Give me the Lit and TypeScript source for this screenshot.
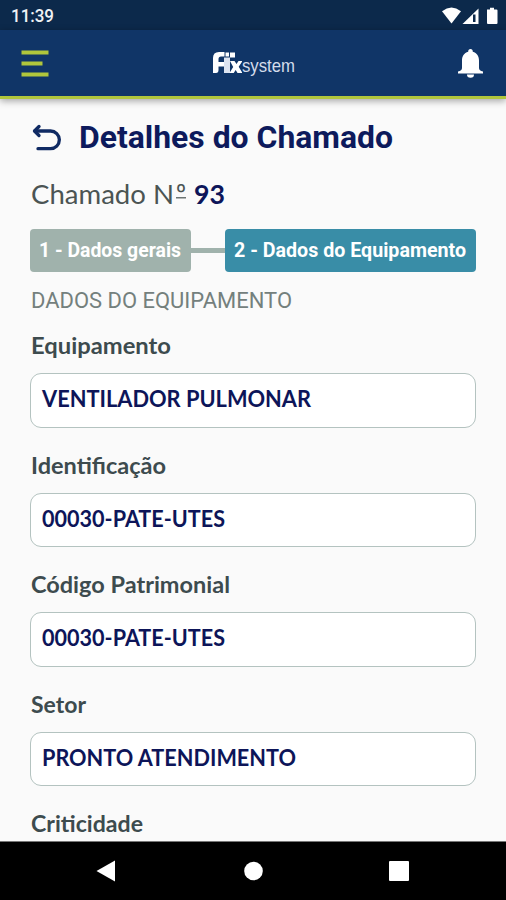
import { LitElement, html, css } from "lit";
import { customElement, property, state } from "lit/decorators.js";
import { styleMap } from "lit/directives/style-map.js";

/** One line of text condensed or widened to a given advance width. */
@customElement("fitted-text")
class FittedText extends LitElement {
  @property({ type: Number }) width = 0;
  @property() text = "";
  @state() ratio = 1;

  static styles = css`
    :host { display: block; white-space: pre; }
    .line { display: inline-block; transform-origin: 0 50%; }
  `;

  firstUpdated() {
    const line = this.renderRoot.querySelector(".line") as HTMLElement;
    this.ratio = this.width / line.getBoundingClientRect().width;
  }

  render() {
    return html`<span class="line" style=${styleMap({ transform: `scaleX(${this.ratio})` })}>${this.text}</span>`;
  }
}

@customElement("detail-field")
class DetailField extends LitElement {
  @property() label = "";
  @property() value = "";
  @property({ type: Number }) labelWidth = 0;
  @property({ type: Number }) valueWidth = 0;

  static styles = css`
    :host { display: block; height: 119.5px; flex: none; }
    .label { height: 30px; line-height: 30px; padding-left: 1px; margin-bottom: 12px;
      font-size: 22px; font-weight: 700; color: #3d4b4e; }
    .box { box-sizing: border-box; height: 54.5px; border: 1.5px solid #b4c3c0; border-radius: 11px;
      background: #fff; padding: 10px 0 0 11px; line-height: 30px;
      font-size: 22.5px; font-weight: 700; color: #0d1559; }
  `;

  render() {
    return html`
      <div class="label"><fitted-text .text=${this.label} .width=${this.labelWidth}></fitted-text></div>
      ${this.value
        ? html`<div class="box"><fitted-text .text=${this.value} .width=${this.valueWidth}></fitted-text></div>`
        : ""}
    `;
  }
}

const fields = [
  { label: "Equipamento", lw: 140, value: "VENTILADOR PULMONAR", vw: 269 },
  { label: "Identificação", lw: 135, value: "00030-PATE-UTES", vw: 183 },
  { label: "Código Patrimonial", lw: 199, value: "00030-PATE-UTES", vw: 183 },
  { label: "Setor", lw: 55, value: "PRONTO ATENDIMENTO", vw: 254 },
  { label: "Criticidade", lw: 112, value: "", vw: 0 },
];

@customElement("app-root")
class AppRoot extends LitElement {
  static styles = css`
    :host { display: flex; flex-direction: column; width: 506px; height: 900px; overflow: hidden;
      background: #fafafa; font-family: Lato, "Noto Sans", sans-serif; }
    svg { display: block; flex: none; }
    .status { flex: none; height: 30px; box-sizing: border-box; background: #0c294b; display: flex;
      align-items: center; justify-content: space-between; padding: 1px 8px 0 11px; }
    .clock { font: 500 17.5px/28px Roboto, sans-serif; color: #f0f2f5; }
    .bar { flex: none; height: 69px; box-sizing: border-box; background: #103567; border-bottom: 3px solid #b0c63c;
      display: flex; align-items: center; justify-content: space-between; padding: 0 23px 0 21px;
      box-shadow: 0 2px 7px rgba(0, 0, 0, 0.35); position: relative; }
    .brand { display: flex; align-items: center; padding-left: 9px; }
    .system { font: 400 19px/24px "Liberation Sans", sans-serif; color: #d4dceb; padding-top: 5px; }
    main { flex: 1; min-height: 0; overflow: hidden; padding: 18px 30px 0; display: flex; flex-direction: column; }
    .title { flex: none; display: flex; align-items: center; height: 40px; gap: 17px; padding-left: 2px; }
    .title fitted-text { font: 700 32px/40px Roboto, sans-serif; color: #0d1a5c; }
    .ticket { flex: none; display: flex; height: 36px; margin-top: 19px; padding-left: 1px;
      line-height: 36px; font-size: 27.5px; color: #4b5453; }
    .word { width: 145px; font-weight: 400; }
    .ordinal { width: 10px; margin-right: 8px;
      background: linear-gradient(#6c7473, #6c7473) 0 21px / 10px 1.5px no-repeat; }
    .number { font-weight: 700; color: #0d1559; width: 31px; }
    .steps { flex: none; display: flex; align-items: center; height: 43px; margin-top: 17px; }
    .step { box-sizing: border-box; height: 43px; border-radius: 4px; padding-left: 9px;
      font: 700 20px/43px Roboto, sans-serif; color: #fff; }
    .first { width: 161px; background: #a0b2ac; }
    .second { width: 251px; background: #398da7; }
    .link { width: 34px; height: 5px; background: #a0b2ac; }
    .section { flex: none; height: 28px; line-height: 28px; margin-top: 15px; padding-left: 1px;
      font-family: Roboto, sans-serif; font-size: 22px; font-weight: 400; color: #74807d; }
    .fields { margin-top: 16px; display: flex; flex-direction: column; }
    nav { flex: none; height: 59px; box-sizing: border-box; background: #000; border-top: 1px solid #777;
      display: flex; align-items: center; padding: 0 97px 0 96px; justify-content: space-between; }
  `;

  render() {
    return html`
      <div class="status">
        <fitted-text class="clock" .text=${"11:39"} .width=${43}></fitted-text>
        <svg width="56" height="18" viewBox="0 0 56 18" fill="#fff">
          <path d="M0 4.2Q9.500-3 19 4.200L9.500 16.500Z" />
          <path d="M36.500 1.500V17H20.500Z" />
          <path d="M31 7.500h2.500V15H31z" fill="#0c294b" />
          <path d="M45 2.500h3V.800h4v1.700h2.500a1 1 0 0 1 1 1V16a1 1 0 0 1-1 1H46a1 1 0 0 1-1-1z" />
        </svg>
      </div>
      <header class="bar">
        <svg width="28" height="27" viewBox="0 0 28 27" fill="#b0c63c">
          <path d="M.500.500h27v4H.500zM.500 11.500h21v4H.500zM.500 22.500h27v4H.500z" />
        </svg>
        <div class="brand">
          <svg width="29" height="24" viewBox="0 0 29 24" fill="#fff">
            <path d="M0 22V7Q0 1 6 1h5.500v4.500H8Q5.500 5.500 5.500 8v3H11v4.500H5.500V19q0 3-2.500 3z" />
            <path d="M11 6.500h6V22h-6z" fill="#dde4f0" />
            <path d="M12.500 1.500h3.500v4h-3.500zM17 1.500h5v5h-5z" />
            <path d="M17 10h4.500l2 3 2-3h4l-3.800 5.800L29.500 22h-5l-1.800-3-2 3H16.500l3.700-6z" />
          </svg>
          <fitted-text class="system" .text=${"system"} .width=${53}></fitted-text>
        </div>
        <svg width="25" height="29" viewBox="0 0 25 29" fill="#fff">
          <path d="M12.500 0c1.500 0 2.300 1 2.300 2.800C19 4 21 7.300 21 11.500V19q0 2.500 4 3.500v2H0v-2Q4 21.500 4 19v-7.500C4 7.300 6 4 10.200 2.800 10.200 1 11 0 12.500 0z" />
          <path d="M9 25.500h7a3.500 3.200 0 0 1-7 0z" />
        </svg>
      </header>
      <main>
        <div class="title">
          <svg width="30" height="28" viewBox="0 0 30 28" fill="none" stroke="#0f2a63" stroke-width="3.300"
            stroke-linecap="round" stroke-linejoin="round">
            <path d="M7 3.500 2.500 8l4.500 4.500" />
            <path d="M3 8h15.500a8.800 8.800 0 0 1 0 17.700H6" />
          </svg>
          <fitted-text .text=${"Detalhes do Chamado"} .width=${314}></fitted-text>
        </div>
        <div class="ticket">
          <fitted-text class="word" .text=${"Chamado N"} .width=${143}></fitted-text>
          <fitted-text class="ordinal" .text=${"º"} .width=${10}></fitted-text>
          <fitted-text class="number" .text=${"93"} .width=${31}></fitted-text>
        </div>
        <div class="steps">
          <div class="step first"><fitted-text .text=${"1 - Dados gerais"} .width=${142}></fitted-text></div>
          <div class="link"></div>
          <div class="step second"><fitted-text .text=${"2 - Dados do Equipamento"} .width=${232}></fitted-text></div>
        </div>
        <div class="section"><fitted-text .text=${"DADOS DO EQUIPAMENTO"} .width=${261}></fitted-text></div>
        <div class="fields">
          ${fields.map(
            (f) => html`<detail-field .label=${f.label} .value=${f.value} .labelWidth=${f.lw} .valueWidth=${f.vw}></detail-field>`
          )}
        </div>
      </main>
      <nav>
        <svg width="20" height="22" viewBox="0 0 20 22" fill="#fff"><path d="M19 .500v21L.500 11z" /></svg>
        <svg width="20" height="20" viewBox="0 0 20 20" fill="#fff"><circle cx="10.500" cy="10" r="9.300" /></svg>
        <svg width="20" height="20" viewBox="0 0 20 20" fill="#fff"><rect width="20" height="20" rx="1" /></svg>
      </nav>
    `;
  }
}
